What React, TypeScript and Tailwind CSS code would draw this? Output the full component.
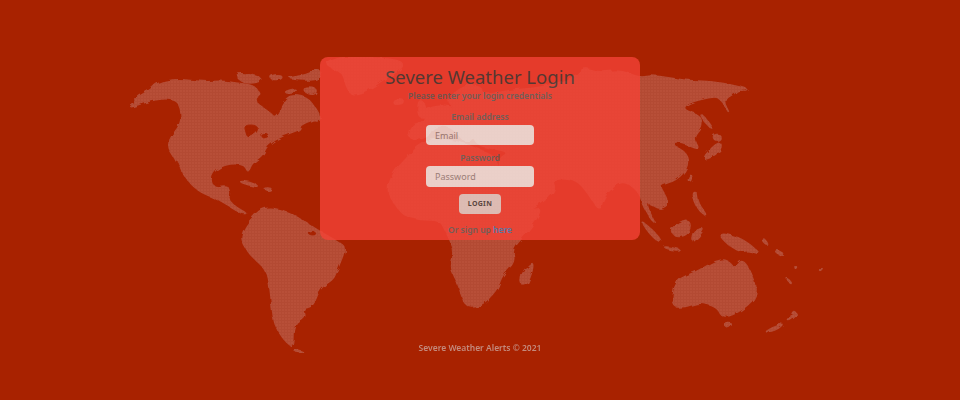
import React from "react";

const land = [
  // north america
  "128,108 137,102 135,99 145,93 153,88 157,83 177,79 203,82 223,81 235,83 253,85 260,93 257,102 272,110 273,117 283,103 290,95 307,97 317,110 320,117 312,120 300,125 300,130 283,135 267,145 263,155 252,163 248,173 245,165 233,163 218,167 210,177 213,188 227,185 230,193 228,200 237,208 248,214 240,213 220,200 200,192 192,185 182,173 175,158 168,148 170,138 182,123 180,103 170,98 153,100 143,103",
  // south america
  "242,233 250,220 263,207 283,210 297,217 317,230 340,243 346,248 337,270 333,280 320,287 313,307 302,308 305,317 293,323 293,347 287,343 277,330 273,317 270,287 267,270 252,257 242,242",
  "293,349 305,352 297,353",
  // arctic islands
  "235,75 243,73 263,78 257,83 243,83",
  "270,76 280,74 283,79 272,80",
  "287,78 307,75 320,68 320,80 300,80",
  "283,92 297,88 292,94",
  "303,88 317,88 315,95 306,93",
  "312,116 320,113 320,121 314,121",
  // caribbean
  "238,181 250,182 260,187 248,185",
  "263,188 272,188 269,191",
  // greenland and iceland
  "332,60 345,57 400,59 404,68 385,78 372,88 352,96 346,86 343,72 326,66",
  "392,100 402,98 404,103 395,105",
  // eurasia
  "640,78 653,75 687,81 710,81 737,86 750,90 737,90 735,93 723,100 732,117 720,97 710,97 687,103 683,110 700,115 703,127 693,138 700,150 688,145 678,142 672,145 687,153 688,167 677,180 660,185 662,190 670,203 660,210 648,202 647,207 657,227 643,207 640,193 627,182 617,183 603,197 600,212 588,193 577,180 560,177 552,180 556,190 540,205 520,215 505,185 497,160 510,152 490,148 478,145 472,135 466,144 455,130 445,125 432,127 428,138 408,140 410,125 425,122 424,110 440,105 455,108 446,100 465,85 480,85 483,96 510,90 540,88 575,78 583,67 600,73 620,70",
  // uk
  "418,100 424,102 428,116 418,118",
  // africa
  "387,190 393,173 405,160 417,147 433,138 460,142 480,150 493,155 500,170 505,185 517,200 525,212 542,207 535,222 520,240 512,250 515,262 502,275 497,290 480,307 465,307 458,283 450,268 455,253 450,240 445,230 440,220 420,220 403,215 392,200",
  "535,260 528,285 520,285 523,270",
  // asia pacific
  "703,157 720,140 722,150 707,160",
  "713,135 720,134 720,140 714,140",
  "700,115 703,115 713,128 710,128",
  "689,176 692,175 691,181 688,181",
  "692,193 697,192 698,203 708,217 698,210",
  "640,220 653,230 663,243 653,238",
  "662,246 683,250 670,250",
  "670,230 690,218 690,233 677,238",
  "692,243 695,230 705,228 698,237",
  "720,233 737,237 748,243 762,255 748,250 742,252 733,248 723,240",
  // australia and nz
  "672,307 675,280 697,272 717,260 728,260 735,270 743,257 758,287 753,302 730,317 720,315 717,307 700,302 685,307",
  "723,323 732,322 727,328",
  "762,333 785,322 777,330",
  "787,322 798,315 793,310 791,318",
  "763,238 767,242 768,246 764,243",
  "775,252 783,256 784,254 777,250",
  "796,266 798,268 796,270",
  "819,269 823,268 820,271",
  "786,277 792,283 790,284",
];

const water = [
  // hudson bay
  "257,94 270,90 280,97 282,104 275,117 271,112 262,106 257,102",
  "244,125 257,125 258,132 248,138 246,133",
  "260,133 270,134 262,138",
  "177,160 184,178 181,177 176,162",
  "307,232 315,231 316,235 310,235",
];

// rounds the hand traced coastlines, curve runs through the edge midpoints
const smooth = (points: string) => {
  const p = points.split(" ").map((s) => s.split(",").map(Number));
  const mid = (a: number[], b: number[]) => `${(a[0] + b[0]) / 2} ${(a[1] + b[1]) / 2}`;
  let d = `M${mid(p[p.length - 1], p[0])}`;
  p.forEach((pt, i) => {
    d += ` Q${pt[0]} ${pt[1]} ${mid(pt, p[(i + 1) % p.length])}`;
  });
  return d + "Z";
};

const App: React.FC = () => {
  return (
    <div className="relative h-[400px] w-full overflow-hidden bg-[#a82200] font-['Noto_Sans',sans-serif]">
      <svg className="absolute inset-0" width="960" height="400" viewBox="0 0 960 400">
        <defs>
          <pattern id="dots" width="3" height="3" patternUnits="userSpaceOnUse">
            <rect width="3" height="3" fill="#b84f38" />
            <rect y="2" width="3" height="1" fill="#b34a33" />
            <rect x="2" width="1" height="3" fill="#b34a33" />
          </pattern>
          <filter id="coast" x="0" y="0" width="100%" height="100%">
            <feTurbulence type="fractalNoise" baseFrequency="0.12" numOctaves="2" seed="4" />
            <feDisplacementMap in="SourceGraphic" scale="5" />
            <feGaussianBlur stdDeviation="0.4" />
          </filter>
          <mask id="world" maskUnits="userSpaceOnUse" x="0" y="0" width="960" height="400">
            <g filter="url(#coast)">
              {land.map((pts) => (
                <path key={pts} d={smooth(pts)} fill="#fff" stroke="#fff" strokeWidth="1.5" />
              ))}
              {water.map((pts) => (
                <path key={pts} d={smooth(pts)} fill="#000" stroke="#000" />
              ))}
            </g>
          </mask>
        </defs>
        <rect width="960" height="400" fill="url(#dots)" mask="url(#world)" />
      </svg>

      <div className="relative flex flex-col items-center pt-[57px] blur-[0.5px]">
        <div className="flex h-[183px] w-[320px] flex-col items-center rounded-lg bg-[#f44336] pt-2 opacity-80">
          <h1 className="h-6 text-[18.5px] leading-6 text-[#3f3f3f]">Severe Weather Login</h1>
          <p className="h-[14px] text-[8.5px] leading-[14px] font-semibold text-[#626262]">
            Please enter your login credentials
          </p>
          <label className="mt-2 h-3 text-[8.5px] leading-3 font-semibold text-[#626262]">
            Email address
          </label>
          <input
            placeholder="Email"
            className="mt-0.5 h-5 w-[108px] rounded-sm bg-[#f8f0ee] px-[9px] text-[9px] placeholder:text-[#948a88]"
          />
          <label className="mt-[7px] h-3 text-[8.5px] leading-3 font-semibold text-[#626262]">
            Password
          </label>
          <input
            placeholder="Password"
            className="mt-0.5 h-[21px] w-[108px] rounded-sm bg-[#f8f0ee] px-[9px] text-[9px] placeholder:text-[#948a88]"
          />
          <button className="mt-[7px] h-5 w-[42px] rounded-sm bg-[#e6d6d2] text-[7px] font-bold tracking-[0.3px] text-[#444444]">
            LOGIN
          </button>
          <p className="mt-[10px] h-3 text-[8.5px] leading-3 font-semibold text-[#626262]">
            Or sign up <a className="text-[#4183c4]">here</a>
          </p>
        </div>
        <p className="mt-[102px] h-3 text-[8.5px] leading-3 font-semibold text-[#c48a7c]">
          Severe Weather Alerts © 2021
        </p>
      </div>
    </div>
  );
};

export default App;
